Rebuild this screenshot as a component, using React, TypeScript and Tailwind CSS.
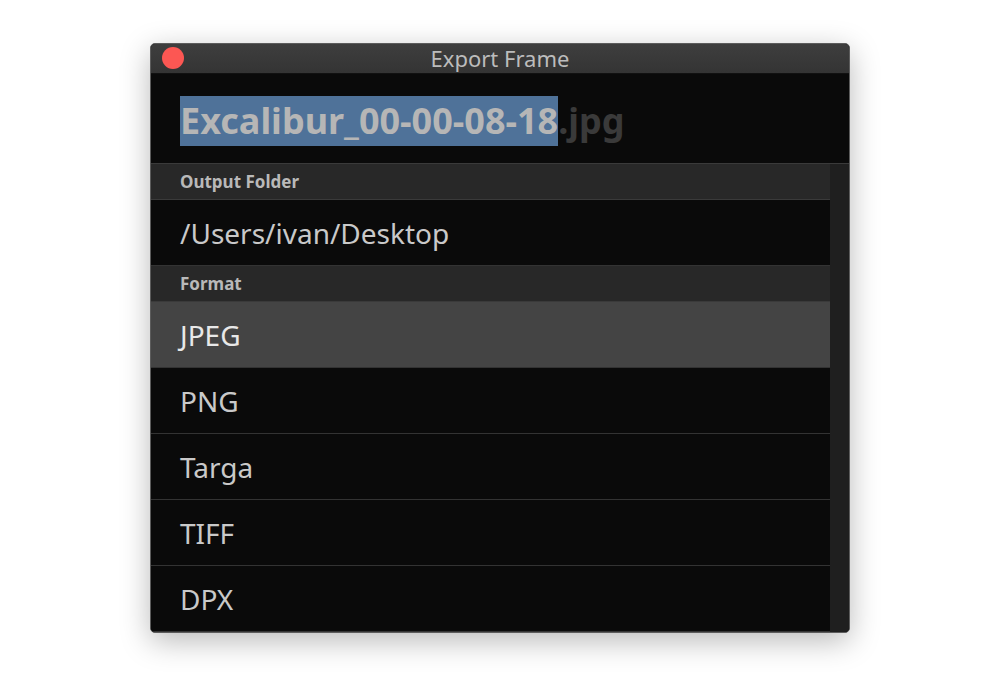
const FONT = "font-['Noto_Sans',sans-serif]";

const FORMATS = ["JPEG", "PNG", "Targa", "TIFF", "DPX"];

function SectionHeader({ label }: { label: string }) {
  return (
    <div className="flex h-[36px] items-center border-b border-[#3a3a3a] bg-[#282828] pl-[29px] text-[17px] font-bold text-[#b9b9b9]">
      {label}
    </div>
  );
}

function ValueRow({ label, selected }: { label: string; selected?: boolean }) {
  return (
    <div
      className={`flex h-[66px] items-center border-b border-[#333333] pl-[29px] text-[28px] ${
        selected ? "bg-[#444444] text-[#e8e8e8]" : "bg-[#0a0a0a] text-[#c9c9c9]"
      }`}
    >
      {label}
    </div>
  );
}

export default function App() {
  return (
    <div className={`flex h-[693px] w-[1000px] justify-center bg-white pt-[43px] ${FONT}`}>
      <div className="flex h-[590px] w-[700px] flex-col overflow-hidden rounded-[5px] border border-[#5c5c5c] bg-[#0a0a0a] shadow-[0_8px_30px_rgba(0,0,0,0.28)]">
        {/* Title bar */}
        <div className="relative flex h-[30px] shrink-0 items-center justify-center border-b border-[#111] bg-gradient-to-b from-[#3e3e3e] to-[#343434] text-[22px] text-[#bcbcbc]">
          <span className="absolute left-[11px] top-[3px] h-[22px] w-[22px] rounded-full bg-[#fc5753]" />
          Export Frame
        </div>

        {/* File name */}
        <div className="flex h-[89px] shrink-0 items-center pl-[29px] pt-[5px] text-[36px] font-bold leading-[50px]">
          <span className="bg-[#4f7299] text-[#b6b6b6]">Excalibur_00-00-08-18</span>
          <span className="text-[#3a3a3a]">.jpg</span>
        </div>

        {/* List + scrollbar */}
        <div className="flex flex-1 border-t border-[#3a3a3a]">
          <div className="flex-1">
            <SectionHeader label="Output Folder" />
            <ValueRow label="/Users/ivan/Desktop" />
            <SectionHeader label="Format" />
            {FORMATS.map((f, i) => (
              <ValueRow key={f} label={f} selected={i === 0} />
            ))}
          </div>
          <div className="w-[19px] bg-[#1f1f1f]" />
        </div>
      </div>
    </div>
  );
}
